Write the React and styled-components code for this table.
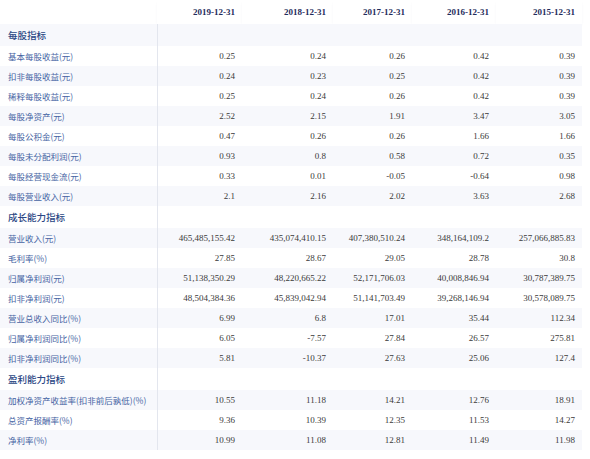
import styled, { createGlobalStyle } from 'styled-components'

const GlobalStyle = createGlobalStyle`
   html, body {
      margin: 0;
      padding: 0;
      background: #ffffff;
   }
`

const columns = ['2019-12-31', '2018-12-31', '2017-12-31', '2016-12-31', '2015-12-31']
const colWidths = [157, 85, 91, 79, 84, 86]

const sections = [
   {
      title: '每股指标',
      rows: [
         ['基本每股收益(元)', '0.25', '0.24', '0.26', '0.42', '0.39'],
         ['扣非每股收益(元)', '0.24', '0.23', '0.25', '0.42', '0.39'],
         ['稀释每股收益(元)', '0.25', '0.24', '0.26', '0.42', '0.39'],
         ['每股净资产(元)', '2.52', '2.15', '1.91', '3.47', '3.05'],
         ['每股公积金(元)', '0.47', '0.26', '0.26', '1.66', '1.66'],
         ['每股未分配利润(元)', '0.93', '0.8', '0.58', '0.72', '0.35'],
         ['每股经营现金流(元)', '0.33', '0.01', '-0.05', '-0.64', '0.98'],
         ['每股营业收入(元)', '2.1', '2.16', '2.02', '3.63', '2.68'],
      ],
   },
   {
      title: '成长能力指标',
      rows: [
         ['营业收入(元)', '465,485,155.42', '435,074,410.15', '407,380,510.24', '348,164,109.2', '257,066,885.83'],
         ['毛利率(%)', '27.85', '28.67', '29.05', '28.78', '30.8'],
         ['归属净利润(元)', '51,138,350.29', '48,220,665.22', '52,171,706.03', '40,008,846.94', '30,787,389.75'],
         ['扣非净利润(元)', '48,504,384.36', '45,839,042.94', '51,141,703.49', '39,268,146.94', '30,578,089.75'],
         ['营业总收入同比(%)', '6.99', '6.8', '17.01', '35.44', '112.34'],
         ['归属净利润同比(%)', '6.05', '-7.57', '27.84', '26.57', '275.81'],
         ['扣非净利润同比(%)', '5.81', '-10.37', '27.63', '25.06', '127.4'],
      ],
   },
   {
      title: '盈利能力指标',
      rows: [
         ['加权净资产收益率(扣非前后孰低)(%)', '10.55', '11.18', '14.21', '12.76', '18.91'],
         ['总资产报酬率(%)', '9.36', '10.39', '12.35', '11.53', '14.27'],
         ['净利率(%)', '10.99', '11.08', '12.81', '11.49', '11.98'],
      ],
   },
]

const Page = styled.div`
   width: 582px;
   font-family: "Liberation Serif", "Noto Sans CJK SC", serif;
`

const Table = styled.table`
   width: 582px;
   border-collapse: collapse;
   table-layout: fixed;
`

const HeadCell = styled.th`
   height: 24px;
   padding: 0 7px 0 0;
   text-align: right;
   font-size: 9px;
   font-weight: bold;
   color: #1f2d5c;
   background: #ffffff;
   box-shadow: 0 2px 3px -1px rgba(40, 60, 120, 0.08);
`

const Row = styled.tr`
   background: ${(p) => (p.$striped ? '#f7f8fc' : '#ffffff')};
`

const LabelCell = styled.td`
   height: ${(p) => (p.$section ? '22px' : '20px')};
   padding: 0 0 0 8px;
   text-align: left;
   white-space: nowrap;
   font-family: "Noto Sans CJK SC", "Liberation Serif", sans-serif;
   font-size: ${(p) => (p.$section ? '9.5px' : '8.5px')};
   font-weight: ${(p) => (p.$section ? 500 : 400)};
   color: ${(p) => (p.$section ? '#2b4784' : '#4563a3')};
   border-right: 1px solid #e3e6ee;
`

const ValueCell = styled.td`
   padding: 0 7px 0 0;
   text-align: right;
   white-space: nowrap;
   font-size: 9px;
   color: #3a3a3a;
`

const App = () => {
   let index = 0

   return (
      <Page>
         <GlobalStyle />
         <Table>
            <colgroup>
               {colWidths.map((w, i) => (
                  <col key={i} style={{ width: w }} />
               ))}
            </colgroup>
            <thead>
               <tr>
                  <HeadCell />
                  {columns.map((c) => (
                     <HeadCell key={c}>{c}</HeadCell>
                  ))}
               </tr>
            </thead>
            <tbody>
               {sections.map((section) => {
                  const sectionRow = (
                     <Row key={section.title} $striped={index++ % 2 === 0}>
                        <LabelCell $section>{section.title}</LabelCell>
                        <ValueCell colSpan={5} />
                     </Row>
                  )
                  const dataRows = section.rows.map((row) => (
                     <Row key={row[0]} $striped={index++ % 2 === 0}>
                        <LabelCell>{row[0]}</LabelCell>
                        {row.slice(1).map((v, i) => (
                           <ValueCell key={i}>{v}</ValueCell>
                        ))}
                     </Row>
                  ))
                  return [sectionRow, ...dataRows]
               })}
            </tbody>
         </Table>
      </Page>
   )
}

export default App
